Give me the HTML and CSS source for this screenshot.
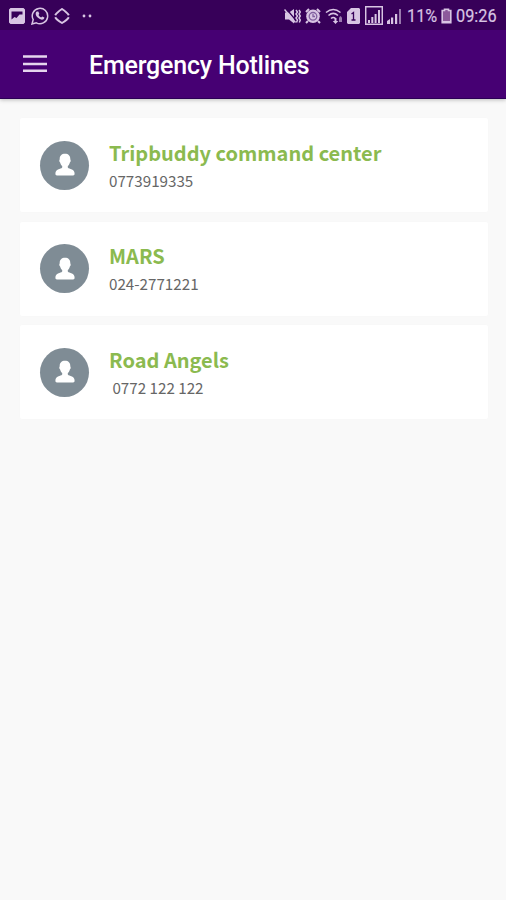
FILE: index.html
```html
<!DOCTYPE html>
<html lang="en">
<head>
<meta charset="utf-8">
<title>Emergency Hotlines</title>
<link rel="stylesheet" href="styles.css">
</head>
<body>
<svg class="defs" aria-hidden="true">
  <symbol id="person" viewBox="0 0 20 24">
    <path d="M10 .8c3.400 0 5.300 2 5.300 5.200 0 .8.500 1.100.4 2-.1.800-.7 1-.9 1.700-.4 1.600-1.100 2.600-2 3.300v1.600c.8 1.200 2.300 1.100 4.200 1.800 1.900.8 2.500 2.200 2.600 4.300 0 1.100-.6 1.700-1.500 1.700H1.900c-.9 0-1.500-.6-1.500-1.700.1-2.100.7-3.500 2.600-4.300 1.900-.7 3.400-.6 4.200-1.800V13c-.9-.7-1.600-1.700-2-3.300-.2-.7-.8-.9-.9-1.700-.1-.9.400-1.200.4-2C4.700 2.800 6.600.8 10 .8z"/>
  </symbol>
</svg>
<header>
  <div class="status">
    <div class="notices">
      <svg width="16" height="16" viewBox="0 0 16 16"><path class="solid" fill-rule="evenodd" d="M1.500 0h13L16 1.500v13L14.500 16h-13L0 14.500v-13zM2.500 3.500v8l3-2.500 2 1 3-3.500h3v-3z"/></svg>
      <svg width="18" height="18" viewBox="0 0 18 18"><path class="line" d="M1 17l1.200-4.300A7.700 7.700 0 1 1 5.300 15.800z"/><path class="solid" d="M6 4.500l1.300 0 1 2.200-.8 1.200c.6 1.100 1.400 1.900 2.600 2.500l1.100-1 2.200 1.100c-.2 1.700-1.300 2.300-2.600 2.200C7.500 12 4.500 9 4.700 6.500c0-.9.500-1.600 1.300-2z"/></svg>
      <svg width="16" height="16" viewBox="0 0 16 16"><path class="line thick" d="M1.200 7.300C2.500 5 5 3 8 1c3 2 5.500 4 6.800 6.300M1.200 9.200C2.500 11.500 5 13.200 8 15c3-1.800 5.500-3.500 6.800-5.800"/></svg>
      <svg class="dots" width="10" height="4" viewBox="0 0 10 4"><circle class="solid" cx="2" cy="2" r="1.400"/><circle class="solid" cx="8" cy="2" r="1.400"/></svg>
    </div>
    <div class="signals">
      <svg width="17" height="16" viewBox="0 0 17 16"><path class="solid" d="M1 4.500h4L10 1v14.500L5 11.500H1z"/><path class="cut" d="M2 .5l10 12"/><path class="line" d="M.5 1.500l11 13M12 2l1.500 2L12 6l1.500 2-1.500 2 1.500 2-1 2.500M15 2l1.300 2L15 6l1.300 2L15 10l1.300 2-1 2.500"/></svg>
      <svg width="16" height="16" viewBox="0 0 16 16"><path class="line thick" d="M1 4l3-3M15 4l-3-3M3 13l-2 2M13 13l2 2"/><circle class="solid" cx="8" cy="8.300" r="6.800"/><circle class="ring" cx="8" cy="8.300" r="3.800"/><path class="ring" d="M8 6v2.500h2"/></svg>
      <svg width="18" height="16" viewBox="0 0 18 16"><path class="line" d="M1 4.500C5.500.7 11 .7 15.500 4.500M3.500 7.500c3-2.700 6.500-2.700 9.500 0M6 10.500c1.500-1.300 3-1.300 4.500 0"/><path class="solid" d="M9.500 10h2v3h1.800l-2.800 3-2.800-3h1.800z"/><path class="faint" d="M14 14V9.500l1.500-1.500L17 9.500V14z"/></svg>
      <svg width="13" height="16" viewBox="0 0 13 16"><path class="solid" d="M4 0h8l1 1v14l-1 1H1l-1-1V4z"/><path class="digit" d="M4.500 6l2-1.500V12M4.500 12h4"/></svg>
      <svg class="framed" width="18" height="19" viewBox="0 0 18 19"><path class="frame" d="M.7.700h16.600v17.600H.7z"/><path class="solid" d="M3 14h2v3H3zM6.300 11h2v6h-2zM9.600 8h2v9h-2zM13 4h2v13h-2z"/></svg>
      <svg width="14" height="16" viewBox="0 0 14 16"><path class="solid" d="M0 13l3-2v5H0zM4 9.500h2.200V16H4zM8 6h2.200v10H8z"/><path class="faint" d="M12 1h2v15h-2z"/></svg>
      <span class="percent">11%</span>
      <svg width="11" height="16" viewBox="0 0 11 16"><path class="battery" d="M3.500 1.300h4v1.200h2.300v12.300H1.200V2.500h2.300z"/><path class="solid" d="M2 13h7v2H2z"/></svg>
      <span class="clock">09:26</span>
    </div>
  </div>
  <div class="appbar">
    <svg class="menu" width="24" height="18" viewBox="0 0 24 18"><path d="M0 1.500h24M0 9h24M0 15.800h24"/></svg>
    <h1>Emergency Hotlines</h1>
  </div>
</header>
<main>
  <article class="card">
    <div class="avatar"><svg width="20" height="24"><use href="#person"/></svg></div>
    <div class="info"><h2>Tripbuddy command center</h2><p>0773919335</p></div>
  </article>
  <article class="card">
    <div class="avatar"><svg width="20" height="24"><use href="#person"/></svg></div>
    <div class="info"><h2>MARS</h2><p>024-2771221</p></div>
  </article>
  <article class="card">
    <div class="avatar"><svg width="20" height="24"><use href="#person"/></svg></div>
    <div class="info"><h2>Road Angels</h2><p> 0772 122 122</p></div>
  </article>
</main>
</body>
</html>
```
FILE: styles.css
```css
* { box-sizing: border-box; }
body {
  margin: 0;
  min-height: 900px;
  background: #f9f9f9;
  font-family: "Noto Sans CJK SC", "Noto Sans", sans-serif;
}
h1, h2, p { margin: 0; }
svg { display: block; flex: none; }
.defs { display: none; }
header {
  height: 99px;
  background: #460073;
  border-bottom: 1px solid #2b0055;
  box-shadow: 0 1px 4px rgba(0, 0, 0, .25);
}
.status {
  height: 30px;
  display: flex;
  justify-content: space-between;
  align-items: center;
  padding: 1px 9px 0 9px;
  background: #370059;
  color: #d8c5e3;
  font-family: Roboto, sans-serif;
  font-size: 18.500px;
}
.notices, .signals { display: flex; align-items: center; }
.notices { gap: 5.500px; }
.dots { margin-left: 6px; }
.signals { gap: 4px; }
.framed { margin-left: 1px; }
.percent { margin-left: 2px; width: 30px; }
.clock { width: 41px; }
.percent, .clock {
  display: block;
  white-space: nowrap;
  -webkit-text-stroke: .2px #d8c5e3;
  transform: scaleX(.88);
  transform-origin: left;
}
.solid { fill: #d8c5e3; }
.faint { fill: #9979ad; }
.line, .frame { fill: none; stroke: #d8c5e3; stroke-width: 1.5; }
.thick { stroke-width: 2; }
.battery { fill: #8c5a9b; stroke: #d8c5e3; stroke-width: 1.6; }
.cut, .ring, .digit { fill: none; stroke: #370059; stroke-width: 1.3; }
.ring { stroke: #8160a0; }
.appbar {
  height: 68px;
  display: flex;
  align-items: center;
  padding: 0 23px;
}
.menu { stroke: #e5d5ee; stroke-width: 2.5; margin-top: -1px; }
h1 {
  margin: 3px 0 0 42px;
  color: #fff;
  font: 500 25px/32px Roboto, sans-serif;
  letter-spacing: -.2px;
  white-space: nowrap;
}
main {
  display: grid;
  gap: 9.600px;
  padding: 19px 18px 0 20px;
}
.card {
  height: 94px;
  display: flex;
  align-items: center;
  gap: 20px;
  padding: 0 20px;
  background: #fff;
  border-radius: 2px;
  box-shadow: 0 0 2px rgba(0, 0, 0, .015);
}
.avatar {
  width: 49px;
  height: 49px;
  display: flex;
  align-items: center;
  justify-content: center;
  border-radius: 50%;
  background: #7f8c95;
}
.avatar svg { fill: #fff; }
.info { padding-top: 1px; }
h2 {
  color: #8bba4f;
  font-size: 20px;
  font-weight: 700;
  line-height: 28px;
  white-space: nowrap;
}
p {
  color: #666;
  font-size: 15.200px;
  line-height: 26px;
  white-space: pre;
}
```
